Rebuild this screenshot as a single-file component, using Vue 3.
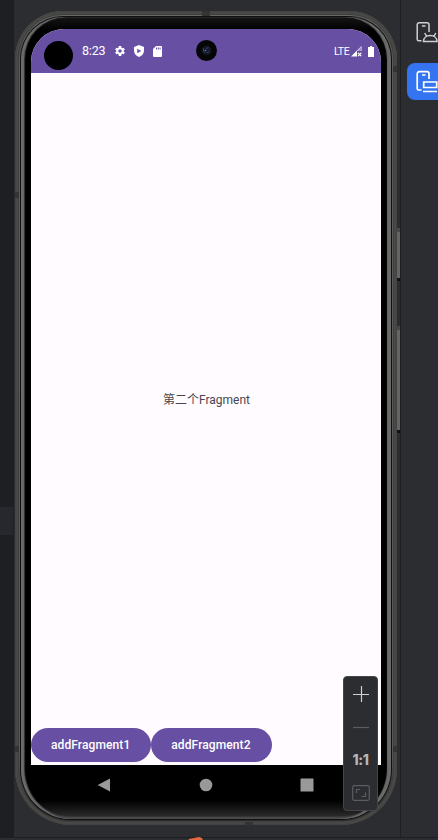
<script setup>
const fragments = ['addFragment1', 'addFragment2']
</script>

<template>
  <div class="ide">
    <div class="gutter"><div class="row-mark"></div></div>
    <main class="stage">
      <div class="phone">
        <i class="side-key power"></i>
        <i class="side-key volume"></i>
        <i class="band top"></i>
        <i class="band foot"></i>
        <i class="band lu"></i><i class="band ru"></i>
        <i class="band ld"></i><i class="band rd"></i>
        <div class="rim">
          <div class="bezel">
            <div class="screen">
              <header class="status">
                <span class="cutout"></span>
                <span class="clock">8:23</span>
                <svg class="gear" viewBox="0 0 24 24"><path fill="#fff" fill-rule="evenodd" d="M19.4 13a7 7 0 0 0 0-2l2.3-1.8-2.2-3.8-2.7 1.1a8 8 0 0 0-1.8-1L14.5 2h-5L9 5.500a8 8 0 0 0-1.800 1L4.500 5.400 2.300 9.200 4.600 11a7 7 0 0 0 0 2l-2.300 1.800 2.200 3.800 2.700-1.100a8 8 0 0 0 1.800 1l.5 3.500h5l.5-3.500a8 8 0 0 0 1.800-1l2.700 1.100 2.200-3.800zM12 15.500a3.500 3.500 0 1 1 0-7 3.500 3.500 0 0 1 0 7z" /></svg>
                <svg class="shield" viewBox="0 0 24 24"><path fill="#fff" fill-rule="evenodd" d="M12 0 2 4v7.500C2 17.500 6.500 22 12 24c5.500-2 10-6.500 10-12.500V4zM8.500 7.500v9l8-4.500z" /></svg>
                <svg class="card" viewBox="0 0 9 11"><path fill="#fff" fill-rule="evenodd" d="M3 0h5a1 1 0 0 1 1 1v9a1 1 0 0 1-1 1H1a1 1 0 0 1-1-1V3zM3 1.500v2h1v-2zM4.800 1.500v2h1v-2zM6.600 1.500v2h1v-2z" /></svg>
                <span class="camera"><svg viewBox="0 0 21 21"><circle cx="10.500" cy="10.500" r="10.500" fill="#050506" /><circle cx="10.500" cy="10.500" r="5" fill="#11151d" /><circle cx="10.500" cy="10.500" r="3.500" fill="#171a2b" /><path d="M7.500 8.500a4 4 0 0 0 1 4" fill="none" stroke="#28506c" /><path d="M10 8.500l2.500-1M11 13l2-1.500" stroke="#443d68" /><circle cx="9.500" cy="10.500" r=".8" fill="#5488ad" /></svg></span>
                <span class="lte">LTE</span>
                <svg class="signal" viewBox="0 0 11 11"><path d="M0 10.500 10.500 0v5H6v5.500z" fill="#fff" /><path d="M6 5 10.500 .5V5H6z" fill="#a896cc" /><path d="m7 6.800 3.200 3.400m0-3.400L7 10.200" stroke="#fff" stroke-width="1.200" /></svg>
                <svg class="battery" viewBox="0 0 6 11"><path d="M2 0h2v1h2v10H0V1h2z" fill="#fff" /></svg>
              </header>
              <section class="content">第二个Fragment</section>
              <div class="actions"><button v-for="name in fragments" :key="name">{{ name }}</button></div>
            </div>
            <nav class="system-nav">
              <svg viewBox="0 0 14 14"><path d="M.7 7 13 .5v13z" /></svg>
              <svg viewBox="0 0 14 14"><circle cx="7" cy="7" r="6.300" /></svg>
              <svg viewBox="0 0 14 14"><rect x=".5" y=".5" width="13" height="13" rx=".5" /></svg>
            </nav>
          </div>
        </div>
      </div>
      <div class="zoom-bar">
        <svg class="plus" viewBox="0 0 18 18"><path d="M1 9.500h16M9.500 1v16" /></svg>
        <svg class="minus" viewBox="0 0 18 18"><path d="M1 9.500h16" /></svg>
        <span>1:1</span>
        <svg class="fit" viewBox="0 0 18 16"><rect x=".7" y=".7" width="16.600" height="14.600" rx="1.500" /><path d="M4.500 8V4.500H8M13.500 7.500V11.500H9.500" /></svg>
      </div>
    </main>
    <aside class="tools">
      <span class="tool">
        <svg viewBox="0 0 23 23" fill="none" stroke="#ced0d6" stroke-width="1.500"><path d="M6.500 19.700H3.700a1.500 1.500 0 0 1-1.500-1.500V3.700a2 2 0 0 1 2-2H12a2 2 0 0 1 2 2V11M7 5h3.500M8.500 20.500c0-8 13.500-8 13.500 0zM9.700 12l2 3.500M20.800 12l-2 3.500" /></svg>
      </span>
      <span class="tool active">
        <svg viewBox="0 0 23 23" fill="none" stroke="#fff" stroke-width="1.700"><path d="M6.500 20H3.700a1.500 1.500 0 0 1-1.500-1.500V3.700a2 2 0 0 1 2-2H12a2 2 0 0 1 2 2V9M7 5h3.500M8.700 12h13v5.500h-13zM8 21.500h14" /></svg>
      </span>
    </aside>
    <footer class="bottom"><svg viewBox="0 0 16 4"><path d="M0 4 1 2 11 0l3 1 1 3z" fill="#e8683f" /></svg></footer>
  </div>
</template>

<style>
body { background: #2b2d30; }
</style>

<style scoped>
* { box-sizing: border-box; }
.ide {
  width: 438px;
  height: 840px;
  overflow: hidden;
  display: grid;
  grid-template: 837px 3px / 14px 386px 38px;
  background: #2b2d30;
  font-family: Roboto, "Noto Sans CJK SC", sans-serif;
}
.gutter { background: #1e1f22; padding-top: 507px; }
.row-mark { width: 13px; height: 28px; background: #26282e; }
.stage { position: relative; padding: 11px 3px 0 1px; }
.phone {
  position: relative;
  width: 382px;
  height: 814px;
  padding: 5px;
  border-radius: 48px 48px 56px 56px;
  background: linear-gradient(#6a6a68, #5c5c5a 20px, #585856 740px, #2c2d2c 795px);
  box-shadow: inset 0 0 0 1px #434442, inset 0 0 0 3px #62625f44, inset 0 0 0 4px #3f403e;
}
.rim {
  height: 804px;
  padding: 1px;
  border-radius: 43px 43px 51px 51px;
  background: #101010;
}
.bezel {
  height: 802px;
  padding: 12px 10px 0;
  border-radius: 42px 42px 50px 50px;
  background: linear-gradient(#151515, #000 14px, #000 783px, #292929 799px, #444);
  box-shadow: inset 3px 0 1px #6b6b6b, inset -4px 0 1px #6b6b6b, inset 4px 0 1px #343434, inset 0 -2px 2px #4c4c4c;
}
.screen {
  width: 350px;
  height: 736px;
  overflow: hidden;
  border-radius: 33px 33px 0 0;
  display: flex;
  flex-direction: column;
  background: #fffbfe;
}
.status {
  flex: 0 0 44px;
  display: flex;
  align-items: center;
  background: #6750a4;
  color: #fff;
}
.cutout { flex: none; width: 29px; height: 29px; margin: 9px 9px 0 13px; border-radius: 50%; background: #000; }
.clock { width: 33px; font-size: 12.500px; line-height: 16px; letter-spacing: -.2px; }
.gear { width: 12px; height: 12px; margin-left: -1px; }
.shield { width: 12px; height: 12px; margin-left: 7px; }
.card { width: 9px; height: 11px; margin-left: 8px; }
.camera { width: 21px; height: 21px; margin: -1px 0 0 34px; }
.camera svg { display: block; }
.lte { width: 17px; margin-left: 117px; font-size: 10.500px; letter-spacing: -.4px; }
.signal { width: 11px; height: 11px; }
.battery { width: 6px; height: 11px; margin-left: 6px; }
.content {
  flex: 1;
  display: grid;
  place-items: center;
  padding: 0 0 2px 1px;
  color: #49454f;
  font-size: 12px;
  line-height: 18px;
}
.actions { display: flex; height: 37px; }
button {
  width: 120.300px;
  height: 34px;
  padding: 0 1px 0 0;
  border: 0;
  border-radius: 17px;
  background: #6750a4;
  color: #fff;
  font: 500 12px Roboto, sans-serif;
  letter-spacing: .1px;
}
.system-nav {
  display: flex;
  height: 40px;
  padding-left: 66px;
  gap: 87.500px;
  align-items: center;
}
.system-nav svg { width: 14px; height: 14px; fill: #999; }
.side-key { position: absolute; left: 382px; width: 3px; background: #656663; border-top: 4px solid #484947; border-bottom: 3px solid #111; }
.power { top: 217px; height: 53px; }
.volume { top: 315px; height: 107px; }
.band { position: absolute; background: #343533; }
.top { top: 0; left: 187px; width: 8px; height: 5px; }
.foot { bottom: 0; left: 230px; width: 8px; height: 3px; }
.lu, .ru, .ld, .rd { width: 4px; height: 6px; }
.lu { left: 0; top: 181px; }
.ru { right: 0; top: 55px; }
.ld { left: 0; bottom: 73px; }
.rd { right: 0; bottom: 73px; }
.zoom-bar {
  position: absolute;
  left: 329px;
  top: 676px;
  width: 35px;
  height: 135px;
  padding: 8px 0 0 0;
  display: flex;
  flex-direction: column;
  align-items: center;
  border: 1px solid #43454a;
  border-radius: 4px;
  background: #2b2d30;
  color: #b5b7bc;
}
.zoom-bar svg { width: 18px; fill: none; stroke: #ced0d6; stroke-width: 1.200; }
.plus, .minus { height: 18px; }
.zoom-bar .minus { margin-top: 15px; stroke: #5a5d63; }
.zoom-bar span { margin-top: 15px; height: 18px; font: 800 14px/18px Inter, sans-serif; letter-spacing: -.5px; }
.zoom-bar .fit { height: 16px; margin-top: 16px; stroke: #5a5d63; }
.tools {
  display: flex;
  flex-direction: column;
  align-items: flex-end;
  gap: 12px;
  padding-top: 14px;
  border-left: 1px solid #1e1f22;
}
.tool { width: 31px; height: 37px; padding: 7px 0 0 8px; border-radius: 8px 0 0 8px; }
.tool svg { display: block; width: 23px; height: 23px; }
.active { background: #3574f0; }
.bottom { grid-column: 1 / -1; border-top: 1px solid #1e1f22; padding-left: 188px; background: #2b2d30; }
.bottom svg { display: block; width: 16px; height: 4px; margin-top: -1px; }
</style>
